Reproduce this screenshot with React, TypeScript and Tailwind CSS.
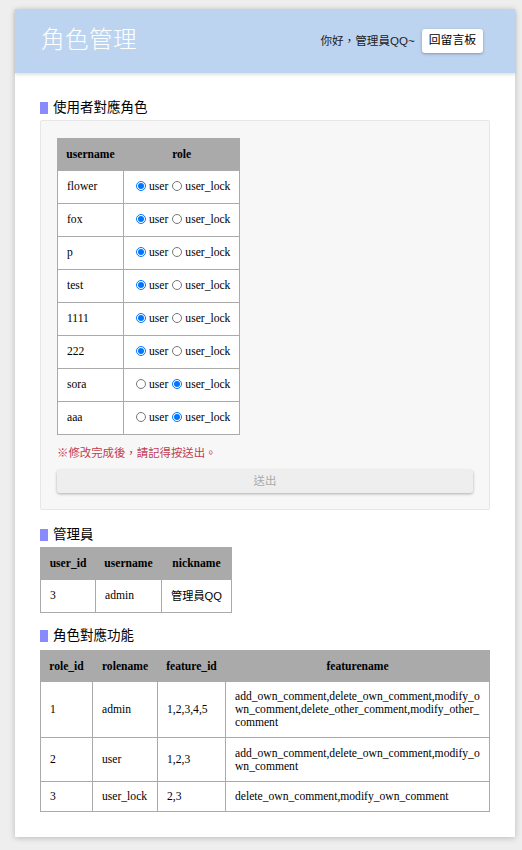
import React from "react";

const serif = "font-['Liberation_Serif','Noto_Sans_CJK_TC',serif]";
const sans = "font-['Liberation_Sans','Noto_Sans_CJK_TC',sans-serif]";

const users = [
  { name: "flower", role: "user" },
  { name: "fox", role: "user" },
  { name: "p", role: "user" },
  { name: "test", role: "user" },
  { name: "1111", role: "user" },
  { name: "222", role: "user" },
  { name: "sora", role: "user_lock" },
  { name: "aaa", role: "user_lock" },
];

const features = [
  {
    id: "1",
    name: "admin",
    fid: "1,2,3,4,5",
    fname: "add_own_comment,delete_own_comment,modify_own_comment,delete_other_comment,modify_other_comment",
    h: "h-[56px]",
  },
  {
    id: "2",
    name: "user",
    fid: "1,2,3",
    fname: "add_own_comment,delete_own_comment,modify_own_comment",
    h: "h-[44px]",
  },
  {
    id: "3",
    name: "user_lock",
    fid: "2,3",
    fname: "delete_own_comment,modify_own_comment",
    h: "h-[30px]",
  },
];

const Heading = ({ children }: { children: React.ReactNode }) => (
  <div className={`flex items-center gap-[5px] h-[16px] ${sans}`}>
    <span className="w-[8px] h-[12px] bg-[#8a8aff]" />
    <h2 className="text-[13.5px] text-black leading-none">{children}</h2>
  </div>
);

const th = "border border-[#aaaaaa] bg-[#aaaaaa] font-bold text-center px-[8px] whitespace-nowrap";
const td = "border border-[#aaaaaa] bg-white px-[9px] text-left";

const App = () => {
  return (
    // page
    <div className="min-h-screen bg-[#eeeeee] pt-[9px] pb-[13px]">
      <div className="ml-[15px] w-[500px] bg-white shadow-[0_1px_6px_rgba(0,0,0,0.22)]">
        {/* header */}
        <header className={`h-[64px] bg-[#bdd4f0] flex items-center justify-between pl-[26px] pr-[32px] shadow-[0_2px_3px_rgba(0,0,0,0.12)] ${sans}`}>
          <h1 className="text-[23.5px] text-white font-light tracking-[0.5px]">角色管理</h1>
          <div className="flex items-center gap-[7px]">
            <span className="text-[11.6px] text-[#222]">你好，管理員QQ~</span>
            <button className="h-[24px] px-[7px] bg-white rounded-[3px] text-[11.8px] text-black shadow-[0_1px_3px_rgba(0,0,0,0.3)]">
              回留言板
            </button>
          </div>
        </header>

        <main className="px-[25px] pt-[27px] pb-[25px]">
          <Heading>使用者對應角色</Heading>

          {/* role form */}
          <div className="mt-[4px] border border-[#e6e6e6] bg-[#f7f7f7] rounded-[2px] px-[16px] pt-[17px] pb-[16px]">
            <table className={`border-collapse table-fixed text-[11.6px] text-black ${serif}`}>
              <thead>
                <tr className="h-[32px]">
                  <th className={`${th} w-[66px]`}>username</th>
                  <th className={`${th} w-[116px]`}>role</th>
                </tr>
              </thead>
              <tbody>
                {users.map((u) => (
                  <tr key={u.name} className="h-[33px]">
                    <td className={td}>{u.name}</td>
                    <td className={`${td} whitespace-nowrap`}>
                      <div className="flex items-center ml-[3px]">
                        <input
                          type="radio"
                          name={u.name}
                          defaultChecked={u.role === "user"}
                          className="w-[10px] h-[10px] -mt-[2px] mr-[3px]"
                        />
                        <span>user</span>
                        <input
                          type="radio"
                          name={u.name}
                          defaultChecked={u.role === "user_lock"}
                          className="w-[10px] h-[10px] -mt-[2px] ml-[4px] mr-[3px]"
                        />
                        <span>user_lock</span>
                      </div>
                    </td>
                  </tr>
                ))}
              </tbody>
            </table>
            <p className={`mt-[10px] text-[11.4px] text-[#c23c4f] ${sans}`}>※修改完成後，請記得按送出。</p>
            <button className={`mt-[8px] w-full h-[23px] bg-[#eeeeee] rounded-[3px] text-[11.4px] text-[#aaaaaa] shadow-[0_1px_3px_rgba(0,0,0,0.3)] ${sans}`}>
              送出
            </button>
          </div>

          <div className="mt-[17px]">
            <Heading>管理員</Heading>
          </div>
          <table className={`mt-[4px] border-collapse table-fixed text-[11.6px] text-black ${serif}`}>
            <thead>
              <tr className="h-[32px]">
                <th className={`${th} w-[55px]`}>user_id</th>
                <th className={`${th} w-[66px]`}>username</th>
                <th className={`${th} w-[68px]`}>nickname</th>
              </tr>
            </thead>
            <tbody>
              <tr className="h-[33px]">
                <td className={td}>3</td>
                <td className={td}>admin</td>
                <td className={`${td} ${sans} whitespace-nowrap px-[7px] text-[11.2px]`}>管理員QQ</td>
              </tr>
            </tbody>
          </table>

          <div className="mt-[15px]">
            <Heading>角色對應功能</Heading>
          </div>
          <table className={`mt-[6px] w-[450px] border-collapse table-fixed text-[11.6px] leading-[13px] text-black ${serif}`}>
            <thead>
              <tr className="h-[31px]">
                <th className={`${th} w-[52px]`}>role_id</th>
                <th className={`${th} w-[65px]`}>rolename</th>
                <th className={`${th} w-[68px]`}>feature_id</th>
                <th className={th}>featurename</th>
              </tr>
            </thead>
            <tbody>
              {features.map((f) => (
                <tr key={f.id} className={f.h}>
                  <td className={td}>{f.id}</td>
                  <td className={td}>{f.name}</td>
                  <td className={td}>{f.fid}</td>
                  <td className={`${td} break-all`}>{f.fname}</td>
                </tr>
              ))}
            </tbody>
          </table>
        </main>
      </div>
    </div>
  );
};

export default App;
